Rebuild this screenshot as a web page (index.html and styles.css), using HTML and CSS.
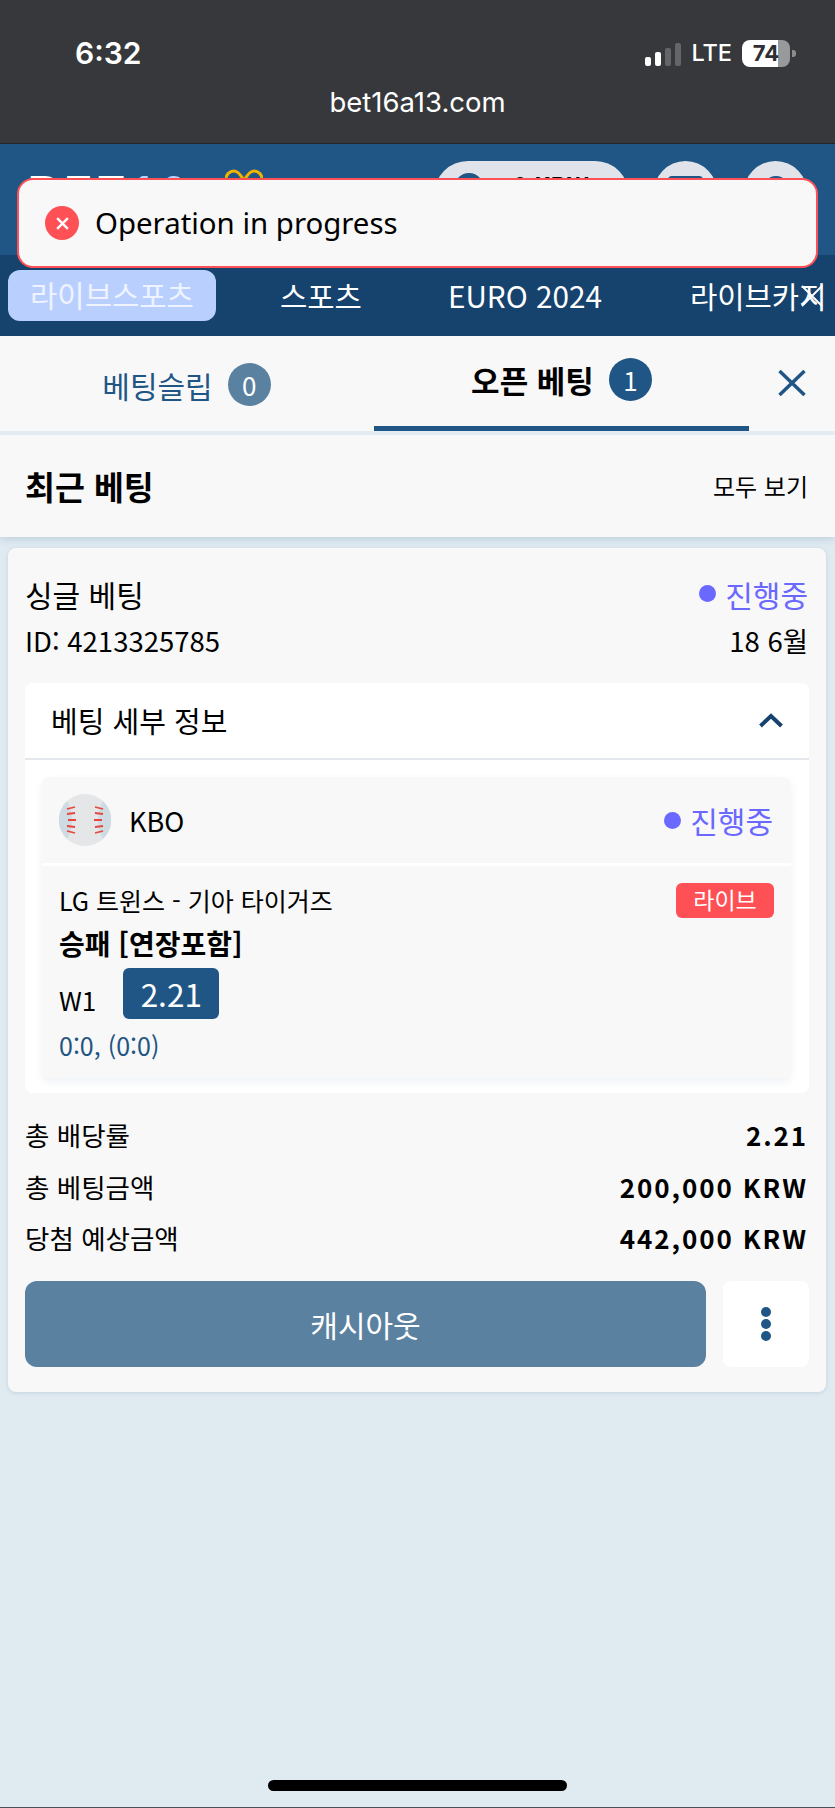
FILE: index.html
```html
<!DOCTYPE html>
<html lang="ko">
<head>
  <meta charset="UTF-8" />
  <meta name="viewport" content="width=device-width, initial-scale=1.0" />
  <title>bet16a13.com</title>
  <link rel="stylesheet" href="styles.css">
</head>
<body>
  <div class="browser-bar">
    <div class="status-row">
      <span class="clock">6:32</span>
      <div class="status-icons">
        <div class="signal">
          <i class="bar b1"></i><i class="bar b2"></i><i class="bar b3"></i><i class="bar b4"></i>
        </div>
        <span class="lte">LTE</span>
        <div class="battery"><span>74</span></div>
        <i class="battery-nub"></i>
      </div>
    </div>
    <div class="url">bet16a13.com</div>
  </div>

  <header class="top-header">
    <div class="logo">
      <span class="logo-text">BET<em>16</em></span>
      <svg class="logo-mark" viewBox="0 0 38 24" width="38" height="24">
        <path d="M19 12C15 4 12 2 9 2a8 8 0 0 0 0 16c4 0 7-2 10-6 3 4 6 6 10 6a8 8 0 0 0 0-16c-3 0-6 2-10 10z" fill="none" stroke="#f0b400" stroke-width="3"/>
      </svg>
    </div>
    <div class="header-actions">
      <div class="balance"><i class="balance-icon"></i><span>0 KRW</span></div>
      <div class="round-btn"><i class="round-inner square"></i></div>
      <div class="round-btn"><i class="round-inner"></i></div>
    </div>
  </header>

  <nav class="main-nav">
    <a class="nav-item active">라이브스포츠</a>
    <a class="nav-item">스포츠</a>
    <a class="nav-item euro">EURO 2024</a>
    <a class="nav-item last">라이브카지노</a>
    <svg class="nav-close" viewBox="0 0 22 22" width="22" height="22">
      <path d="M1 1l20 20M21 1L1 21" stroke="#fff" stroke-width="1.8" fill="none"/>
    </svg>
  </nav>

  <div class="toast">
    <div class="toast-icon">
      <svg viewBox="0 0 14 14" width="15" height="15">
        <path d="M2 2l10 10M12 2L2 12" stroke="#fff" stroke-width="2.2" fill="none"/>
      </svg>
    </div>
    <span>Operation in progress</span>
  </div>

  <div class="tabs">
    <div class="tab tab-slip">
      <span>베팅슬립</span>
      <b class="count muted">0</b>
    </div>
    <div class="tab tab-open">
      <span>오픈 베팅</span>
      <b class="count">1</b>
    </div>
    <div class="tab-close">
      <svg viewBox="0 0 28 26" width="28" height="26">
        <path d="M1.500 1l25 24M26.500 1l-25 24" stroke="#205685" stroke-width="3.500" fill="none"/>
      </svg>
    </div>
  </div>

  <div class="recent-head">
    <h2>최근 베팅</h2>
    <a>모두 보기</a>
  </div>

  <div class="bet-card">
    <div class="bet-top">
      <span class="bet-type">싱글 베팅</span>
      <span class="status"><i class="dot"></i>진행중</span>
    </div>
    <div class="bet-id">
      <span>ID: 4213325785</span>
      <span>18 6월</span>
    </div>

    <div class="details">
      <div class="details-head">
        <span>베팅 세부 정보</span>
        <svg viewBox="0 0 26 15" width="26" height="15">
          <path d="M2.500 13L13 3l10.500 10" stroke="#16436d" stroke-width="4" fill="none"/>
        </svg>
      </div>
      <div class="game">
        <div class="game-head">
          <div class="league">
            <svg class="ball" viewBox="0 0 52 52" width="52" height="52">
              <circle cx="26" cy="26" r="26" fill="#e4e6e8"/>
              <path d="M8 7Q18 26 8 45A26 26 0 0 1 8 7zM44 7Q34 26 44 45A26 26 0 0 0 44 7z" fill="#cfdbe3"/>
              <path d="M8 15l8-2M8 20l8-1M9 26h8M8 32l8 1M8 37l8 2M44 15l-8-2M44 20l-8-1M43 26h-8M44 32l-8 1M44 37l-8 2" stroke="#e8453c" stroke-width="1.800" fill="none"/>
            </svg>
            <span>KBO</span>
          </div>
          <span class="status"><i class="dot"></i>진행중</span>
        </div>
        <div class="game-body">
          <div class="match-row">
            <span>LG 트윈스 - 기아 타이거즈</span>
            <span class="live">라이브</span>
          </div>
          <div class="market">승패 [연장포함]</div>
          <div class="pick">
            <span>W1</span>
            <span class="odds">2.21</span>
          </div>
          <div class="score">0:0, (0:0)</div>
        </div>
      </div>
    </div>

    <div class="totals">
      <div class="total-row"><span>총 배당률</span><b>2.21</b></div>
      <div class="total-row"><span>총 베팅금액</span><b>200,000 KRW</b></div>
      <div class="total-row"><span>당첨 예상금액</span><b>442,000 KRW</b></div>
    </div>

    <div class="actions">
      <button class="cashout">캐시아웃</button>
      <button class="more"><i></i><i></i><i></i></button>
    </div>
  </div>

  <div class="home-indicator"></div>
</body>
</html>
```

FILE: styles.css
```css
* {
  box-sizing: border-box;
}
html, body {
  height: 100%;
}
body {
  position: relative;
  margin: 0;
  height: 1808px;
  overflow: hidden;
  background: #e0eaf1;
  border-bottom: 1px solid #4a5055;
  color: #000;
  font-family: "Noto Sans CJK KR", "Noto Sans", sans-serif;
}

/* phone browser chrome */
.browser-bar {
  height: 144px;
  padding-top: 35px;
  background: #36383b;
  border-bottom: 1px solid #232527;
  color: #fff;
}
.status-row {
  display: flex;
  justify-content: space-between;
  align-items: center;
  height: 36px;
  padding: 0 39px 0 75px;
}
.clock {
  font-family: "Inter", sans-serif;
  font-size: 30px;
  font-weight: 600;
  line-height: 36px;
}
.status-icons {
  display: flex;
  align-items: center;
}
.signal {
  display: flex;
  align-items: flex-end;
  gap: 4px;
  height: 23px;
  margin-top: 3px;
}
.bar {
  display: block;
  width: 6px;
  border-radius: 2px;
  background: #fff;
}
.b1 { height: 9px; }
.b2 { height: 14px; }
.b3 { height: 18px; background: #636568; }
.b4 { height: 23px; background: #636568; }
.lte {
  margin: 0 10px;
  font-family: "Inter", sans-serif;
  font-size: 23.500px;
  font-weight: 500;
  line-height: 28px;
}
.battery {
  display: flex;
  justify-content: center;
  align-items: center;
  width: 48px;
  height: 27px;
  border-radius: 8px;
  background: linear-gradient(90deg, #fff 75%, #98999b 75%);
  color: #2d2f33;
  font-family: "Inter", sans-serif;
  font-size: 22px;
  font-weight: 700;
}
.battery-nub {
  width: 4px;
  height: 7px;
  margin-left: 2px;
  border-radius: 0 3px 3px 0;
  background: #8c8d8f;
}
.url {
  margin-top: 16px;
  text-align: center;
  font-family: "Inter", sans-serif;
  font-size: 27.500px;
  line-height: 30px;
}

/* site header, mostly behind the toast */
.top-header {
  display: flex;
  justify-content: space-between;
  height: 111px;
  padding: 17px 27px 0 28px;
  background: #205685;
}
.logo {
  display: flex;
  align-items: flex-start;
  gap: 20px;
  padding-top: 8px;
}
.logo-text {
  width: 177px;
  margin-top: -1px;
  color: #fff;
  font-family: "Liberation Sans", sans-serif;
  font-size: 42px;
  font-weight: 700;
  letter-spacing: 6px;
  line-height: 46px;
}
.logo-text em {
  margin-left: 2px;
  color: #b9d0ff;
  font-style: normal;
}
.header-actions {
  display: flex;
  gap: 24px;
}
.header-actions .round-btn:last-child {
  margin-left: 1px;
}
.balance {
  display: flex;
  gap: 28px;
  width: 195px;
  height: 68px;
  padding: 9px 19px;
  border-radius: 34px;
  background: #e0e4ea;
  font-weight: 700;
  font-size: 24px;
  line-height: 30px;
}
.balance-icon {
  flex-shrink: 0;
  width: 32px;
  height: 36px;
  margin-top: 3px;
  border-radius: 50%;
  background: #205685;
}
.round-btn {
  display: flex;
  justify-content: center;
  width: 65px;
  height: 68px;
  padding-top: 15px;
  border-radius: 50%;
  background: #e0e4ea;
}
.round-inner {
  width: 30px;
  height: 36px;
  border-radius: 50%;
  background: #205685;
}
.round-inner.square {
  width: 35px;
  border-radius: 4px;
}

/* main nav */
.main-nav {
  position: relative;
  display: flex;
  align-items: center;
  height: 81px;
  padding: 0 0 0 8px;
  overflow: hidden;
  background: #16436d;
  white-space: nowrap;
}
.nav-item {
  flex-shrink: 0;
  color: #fff;
  font-size: 29.700px;
  line-height: 40px;
}
.nav-item.active {
  width: 208px;
  height: 51px;
  margin-right: 64px;
  border-radius: 12px;
  background: #b9d0ff;
  color: #eef3ff;
  text-align: center;
  line-height: 50px;
}
.nav-item.euro {
  margin-left: 86px;
}
.nav-item.last {
  width: 135px;
  margin-left: 88px;
  overflow: hidden;
}
.nav-close {
  position: absolute;
  top: 30px;
  right: 12px;
}

/* toast overlays the header */
.toast {
  position: absolute;
  top: 178px;
  left: 17px;
  display: flex;
  align-items: center;
  gap: 16px;
  width: 801px;
  height: 90px;
  padding-left: 26px;
  border: 2.500px solid #ff5055;
  border-radius: 16px;
  background: #f8f8f8;
  font-family: "Noto Sans", sans-serif;
  font-size: 29.400px;
}
.toast-icon {
  display: flex;
  justify-content: center;
  align-items: center;
  width: 34px;
  height: 34px;
  border-radius: 50%;
  background: #ff5055;
}

/* tabs */
.tabs {
  position: relative;
  display: flex;
  height: 99px;
  background: #f8f8f8;
  border-bottom: 4px solid #e4ebf1;
}
.tab {
  display: flex;
  justify-content: center;
  align-items: center;
  gap: 15px;
  width: 375px;
  height: 95px;
  font-size: 30px;
}
.tab-slip {
  width: 373px;
  padding-top: 2px;
  color: #205685;
}
.tab-open {
  margin-left: 1px;
  padding-bottom: 4px;
  border-bottom: 5px solid #205685;
  font-size: 31px;
  font-weight: 700;
}
.count {
  display: flex;
  justify-content: center;
  align-items: center;
  width: 43px;
  height: 43px;
  border-radius: 50%;
  background: #205685;
  color: #fff;
  font-size: 26px;
  font-weight: 400;
}
.count.muted {
  background: #5b81a0;
}
.tab-close {
  margin: 34px 0 0 29px;
}

/* recent bets heading */
.recent-head {
  display: flex;
  justify-content: space-between;
  align-items: center;
  height: 102px;
  padding: 0 27px 2px 25px;
  background: #f8f8f8;
  box-shadow: 0 2px 8px rgba(32, 86, 133, 0.18);
}
.recent-head h2 {
  margin: 0;
  font-size: 32.500px;
  font-weight: 700;
}
.recent-head a {
  font-size: 24px;
}

/* bet card */
.bet-card {
  height: 844px;
  margin: 11px 9px 0 8px;
  padding: 23px 17px 0;
  border-radius: 8px;
  background: #f8f8f8;
  box-shadow: 0 1px 4px rgba(32, 86, 133, 0.15);
}
.bet-top,
.bet-id,
.game-head,
.match-row,
.total-row {
  display: flex;
  justify-content: space-between;
  align-items: center;
}
.bet-top {
  height: 45px;
  padding-right: 1px;
  font-size: 30px;
}
.bet-id {
  height: 47px;
  padding-right: 1px;
  font-size: 27.500px;
}
.status {
  display: flex;
  align-items: center;
  gap: 9px;
  color: #6a68ff;
  font-size: 30px;
}
.dot {
  width: 17px;
  height: 17px;
  border-radius: 50%;
  background: #6a68ff;
}
.details {
  height: 410px;
  margin-top: 20px;
  border-radius: 8px;
  background: #fff;
}
.details-head {
  display: flex;
  justify-content: space-between;
  align-items: center;
  height: 77px;
  padding: 0 25px 1px 26px;
  border-bottom: 2px solid #e4e8ec;
  font-size: 29px;
}
.game {
  height: 301px;
  margin: 17px 18px 0 17px;
  border-radius: 8px;
  background: #f8f8f8;
  box-shadow: 0 4px 8px rgba(32, 86, 133, 0.08);
}
.game-head {
  height: 89px;
  padding: 0 18px 0 17px;
  border-bottom: 3px solid #fff;
}
.league {
  display: flex;
  align-items: center;
  gap: 18px;
  font-size: 27px;
}
.game-body {
  padding: 16px 17px 0 17px;
  font-size: 25px;
}
.match-row {
  height: 36px;
}
.live {
  width: 98px;
  height: 35px;
  border-radius: 6px;
  background: #ff5055;
  color: #fff;
  text-align: center;
  font-size: 23px;
  line-height: 32px;
}
.market {
  margin-top: 6px;
  font-size: 28px;
  font-weight: 700;
  line-height: 38px;
}
.pick {
  display: flex;
  align-items: flex-end;
  gap: 27px;
  margin-top: 6px;
  font-size: 26px;
  line-height: 38px;
}
.odds {
  width: 96px;
  height: 51px;
  border-radius: 6px;
  background: #205685;
  color: #fff;
  text-align: center;
  font-size: 31.500px;
  line-height: 50px;
}
.score {
  margin-top: 7px;
  color: #1f5582;
  font-size: 25px;
  line-height: 38px;
}
.totals {
  margin-top: 16px;
}
.total-row {
  height: 51.500px;
  padding-right: 1px;
  font-size: 26.500px;
}
.total-row b {
  font-size: 26px;
  letter-spacing: 1.900px;
}
.actions {
  display: flex;
  gap: 17px;
  margin-top: 17px;
}
.actions button {
  height: 86px;
  border: 0;
  padding: 0;
  font-family: inherit;
}
.cashout {
  width: 681px;
  border-radius: 12px;
  background: #5b81a0;
  color: #fff;
  font-size: 30px;
}
.more {
  display: flex;
  flex-direction: column;
  justify-content: center;
  align-items: center;
  gap: 2px;
  width: 86px;
  border-radius: 8px;
  background: #fff;
}
.more i {
  width: 10px;
  height: 10px;
  border-radius: 50%;
  background: #205685;
}
.home-indicator {
  position: absolute;
  left: 268px;
  bottom: 16px;
  width: 299px;
  height: 11px;
  border-radius: 6px;
  background: #000;
}
```
